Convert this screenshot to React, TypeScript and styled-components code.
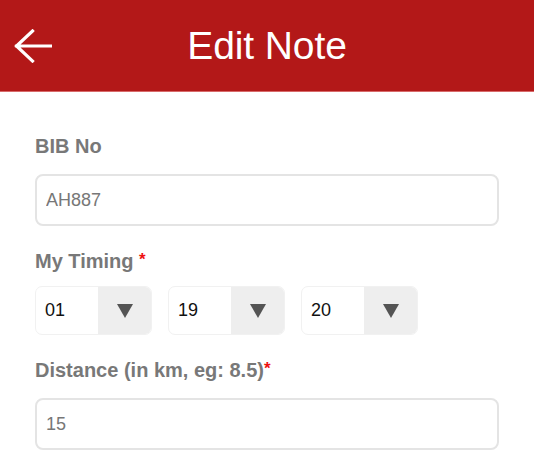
import React from "react";
import styled, { createGlobalStyle } from "styled-components";

const GlobalStyle = createGlobalStyle`
  html, body {
    margin: 0;
    padding: 0;
    background: #ffffff;
    font-family: "Liberation Sans", Arial, Helvetica, sans-serif;
  }
  * { box-sizing: border-box; }
`;

const Page = styled.div`
  width: 534px;
  min-height: 462px;
  background: #ffffff;
`;

const Header = styled.header`
  height: 92px;
  background: #b31818;
  border-bottom: 1px solid #d86a6a;
  display: grid;
  grid-template-columns: 1fr auto 1fr;
  align-items: center;
  padding: 0 14px;
`;

const BackButton = styled.button`
  justify-self: start;
  display: flex;
  align-items: center;
  justify-content: center;
  width: 38px;
  height: 36px;
  padding: 0;
  margin: 0;
  border: none;
  background: transparent;
  cursor: pointer;
`;

const Title = styled.h1`
  margin: 0;
  font-family: "Liberation Sans", Arial, Helvetica, sans-serif;
  font-weight: 400;
  font-size: 39px;
  line-height: 44px;
  color: #ffffff;
  letter-spacing: -0.1px;
`;

const Form = styled.form`
  padding: 42px 35px 0 35px;
`;

const Field = styled.div`
  margin-bottom: 22px;
`;

const Label = styled.label<{ $gap: number }>`
  display: block;
  font-family: "Liberation Sans", Arial, Helvetica, sans-serif;
  font-weight: 700;
  font-size: 20px;
  line-height: 24px;
  color: #787878;
  margin-bottom: ${(p) => p.$gap}px;
`;

const Required = styled.span`
  color: #ee1111;
  font-weight: 700;
  font-size: 17px;
  vertical-align: 3px;
`;

const TextInput = styled.input`
  display: block;
  width: 464px;
  height: 52px;
  border: 2px solid #e4e4e4;
  border-radius: 8px;
  padding: 0 9px;
  font-family: "Liberation Sans", Arial, Helvetica, sans-serif;
  font-size: 18px;
  color: #777777;
  background: #ffffff;
  outline: none;
`;

const SelectRow = styled.div`
  display: flex;
  gap: 16px;
`;

const Select = styled.div`
  display: flex;
  width: 117px;
  height: 49px;
  border: 1.5px solid #f1f1f1;
  border-radius: 7px;
  overflow: hidden;
  background: #ffffff;
`;

const SelectValue = styled.span`
  flex: 1;
  display: flex;
  align-items: center;
  padding-left: 9px;
  font-family: "Liberation Sans", Arial, Helvetica, sans-serif;
  font-size: 18px;
  color: #111111;
`;

const SelectToggle = styled.span`
  width: 53px;
  display: flex;
  align-items: center;
  justify-content: center;
  background: #eeeeee;
`;

const Caret = () => (
  <svg width="16" height="14" viewBox="0 0 16 14">
    <polygon points="0,0 16,0 8,14" fill="#545454" />
  </svg>
);

const BackArrow = () => (
  <svg width="38" height="34" viewBox="0 0 38 34">
    <path
      d="M2.5 17 H37 M18.5 2 L2.5 17 L18.5 32"
      fill="none"
      stroke="#ffffff"
      strokeWidth="3.2"
      strokeLinecap="square"
      strokeLinejoin="miter"
    />
  </svg>
);

const timing = ["01", "19", "20"];

export default function App() {
  return (
    <Page>
      <GlobalStyle />
      <Header>
        <BackButton aria-label="Back">
          <BackArrow />
        </BackButton>
        <Title>Edit Note</Title>
        <span />
      </Header>
      <Form>
        <Field>
          <Label $gap={16}>BIB No</Label>
          <TextInput defaultValue="AH887" />
        </Field>
        <Field>
          <Label $gap={13}>
            My Timing <Required>*</Required>
          </Label>
          <SelectRow>
            {timing.map((t) => (
              <Select key={t}>
                <SelectValue>{t}</SelectValue>
                <SelectToggle>
                  <Caret />
                </SelectToggle>
              </Select>
            ))}
          </SelectRow>
        </Field>
        <Field>
          <Label $gap={16}>
            Distance (in km, eg: 8.5)<Required>*</Required>
          </Label>
          <TextInput defaultValue="15" />
        </Field>
      </Form>
    </Page>
  );
}
